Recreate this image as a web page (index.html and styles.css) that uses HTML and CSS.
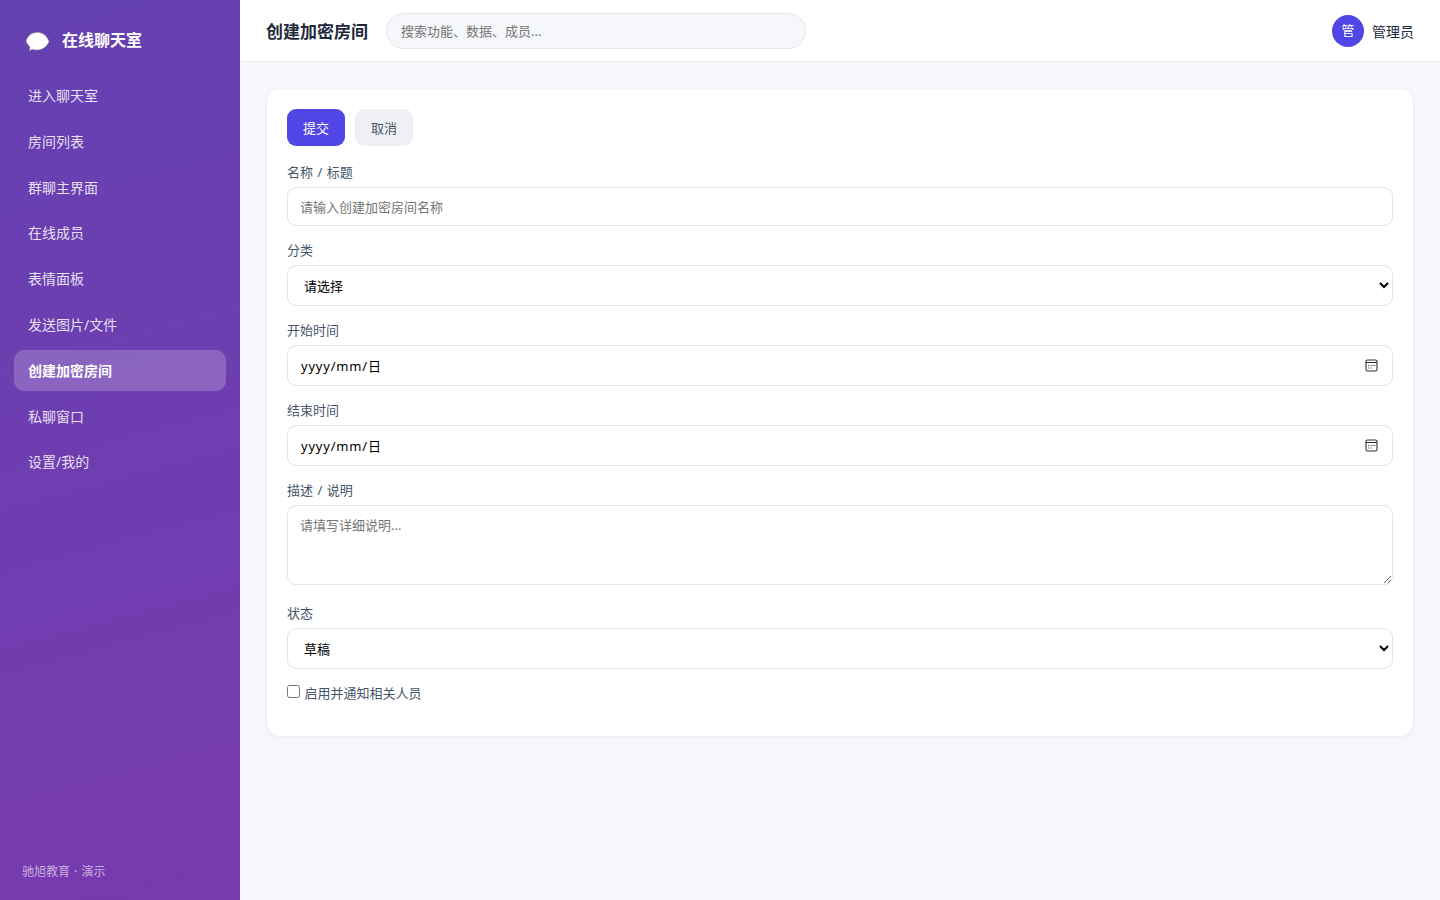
FILE: index.html
```html
<!DOCTYPE html>
<html lang="zh-CN">
<head>
  <meta charset="UTF-8">
  <meta name="viewport" content="width=device-width, initial-scale=1.0">
  <title>创建加密房间</title>
  <link rel="stylesheet" href="styles.css">
</head>
<body>
  <div class="layout">
    <aside class="sidebar">
      <div class="brand">
        <svg class="logo" viewBox="0 0 25 22"><path d="M12.500 2.500C7 2.500 3 5 1 11c1 2.600 2.300 4.300 3.800 5.500l-.2 4.300 2.600-1.500c1.800.6 3.600.7 5.300.6 5.100-.2 9.200-3 11.500-8.400C21.500 5 17.500 2.500 12.500 2.500z"/></svg>
        <span>在线聊天室</span>
      </div>
      <nav class="menu">
        <a href="#">进入聊天室</a>
        <a href="#">房间列表</a>
        <a href="#">群聊主界面</a>
        <a href="#">在线成员</a>
        <a href="#">表情面板</a>
        <a href="#">发送图片/文件</a>
        <a href="#" class="active">创建加密房间</a>
        <a href="#">私聊窗口</a>
        <a href="#">设置/我的</a>
      </nav>
      <div class="side-foot">驰旭教育 · 演示</div>
    </aside>
    <div class="main">
      <header class="topbar">
        <h1>创建加密房间</h1>
        <input class="search" type="text" placeholder="搜索功能、数据、成员...">
        <div class="user"><span class="avatar">管</span><span>管理员</span></div>
      </header>
      <main class="content">
        <form class="card">
          <div class="toolbar">
            <button type="button" class="btn primary">提交</button>
            <button type="button" class="btn">取消</button>
          </div>
          <div class="field">
            <label>名称<span class="slash"> / </span>标题</label>
            <input type="text" placeholder="请输入创建加密房间名称">
          </div>
          <div class="field">
            <label>分类</label>
            <select><option>请选择</option></select>
          </div>
          <div class="field">
            <label>开始时间</label>
            <div class="date">
              <span>yyyy/mm/日</span>
              <svg class="cal" viewBox="0 0 13 13"><rect x="1" y="1" width="11" height="11" rx="1.500"/><path d="M1 3.500h11M5.500 6.500h1M7.500 6.500h1M9.200 6.500h1M3 6.500h1M3 9h1M5.500 9h1"/></svg>
            </div>
          </div>
          <div class="field">
            <label>结束时间</label>
            <div class="date">
              <span>yyyy/mm/日</span>
              <svg class="cal" viewBox="0 0 13 13"><rect x="1" y="1" width="11" height="11" rx="1.500"/><path d="M1 3.500h11M5.500 6.500h1M7.500 6.500h1M9.200 6.500h1M3 6.500h1M3 9h1M5.500 9h1"/></svg>
            </div>
          </div>
          <div class="field area">
            <label>描述<span class="slash"> / </span>说明</label>
            <textarea placeholder="请填写详细说明..."></textarea>
          </div>
          <div class="field">
            <label>状态</label>
            <select><option>草稿</option></select>
          </div>
          <div class="field">
            <label><input type="checkbox"> 启用并通知相关人员</label>
          </div>
        </form>
      </main>
    </div>
  </div>
</body>
</html>
```

FILE: styles.css
```css
*{margin: 0;padding: 0;box-sizing: border-box;}
body{font-family: "Noto Sans", "Noto Sans CJK SC", sans-serif;font-size: 14px;color: #1e293b;background: #f5f7fb;}
a{text-decoration: none;}
.layout{display: flex;min-height: 100vh;}

/* 侧边栏 */
.sidebar{display: flex;flex-direction: column;width: 240px;padding: 22px 14px 20px;color: #fff;background: linear-gradient(165deg, #6541b2, #783aae);}
.brand{display: flex;align-items: center;gap: 12px;height: 36px;padding: 0 11px;font-size: 16px;font-weight: 700;}
.brand span{margin-top: -2px;}
.logo{width: 25px;height: 22px;margin-top: 2px;fill: #fff;stroke: #9b93a0;stroke-width: .6;}
.menu{display: flex;flex-direction: column;gap: 5px;margin-top: 17px;}
.menu a{height: 40.8px;padding: 0 14px;line-height: 42.6px;border-radius: 10px;color: rgba(255,255,255,.85);}
.menu a.active{color: #fff;font-weight: 700;background: rgba(255,255,255,.2);}
.side-foot{margin-top: auto;padding-left: 8px;font-size: 12px;word-spacing: 1px;color: rgba(255,255,255,.6);}

/* 顶栏 */
.main{flex: 1;}
.topbar{display: flex;align-items: center;height: 62px;padding: 0 26px;background: #fff;border-bottom: 1px solid #eef0f4;}
.topbar h1{font-size: 17px;}
.search{width: 420px;height: 36px;margin-left: 18px;padding: 0 14px;font: 13px "Noto Sans", "Noto Sans CJK SC", sans-serif;border: 1px solid #e2e4ee;border-radius: 18px;background: #f5f7fb;}
.user{display: flex;align-items: center;gap: 8px;margin-left: auto;}
.avatar{width: 32px;height: 32px;line-height: 31px;font-size: 13px;text-align: center;color: #fff;border-radius: 50%;background: #4f46e5;}

/* 表单 */
.content{padding: 27px;}
.card{height: 647px;padding: 20px;border-radius: 14px;background: #fff;box-shadow: 0 1px 4px rgba(30,41,90,.06);}
.toolbar{display: flex;gap: 10px;margin-bottom: 16px;}
.btn{width: 58px;height: 37px;padding-bottom: 1px;font: 13px "Noto Sans", "Noto Sans CJK SC", sans-serif;border: 0;border-radius: 9px;color: #475569;background: #eef0f4;}
.btn.primary{color: #fff;background: #4f46e5;}
.field{margin-bottom: 14px;font-size: 13px;color: #475569;}
.field label{display: block;height: 20px;margin-bottom: 5px;line-height: 20px;}
.field input[type=text], .date, .field select, .field textarea{display: block;width: 100%;height: 41px;padding: 0 12px;font: 13px "Noto Sans", "Noto Sans CJK SC", sans-serif;border: 1px solid #e2e4ee;border-radius: 9px;color: #000;background: #fff;}
.field input[type=text]{height: 39px;}
.field textarea{height: 80px;padding: 9px 12px;}
.field .date{display: flex;align-items: center;justify-content: space-between;padding: 0 14px 1px 13px;}
.date span{letter-spacing: .8px;}
.cal{width: 13px;height: 13px;fill: none;stroke: #333;stroke-width: 1.1;}
.slash{word-spacing: 1px;}
.field.area{margin-bottom: 18px;}
.field label input{margin-right: 1px;}
```
